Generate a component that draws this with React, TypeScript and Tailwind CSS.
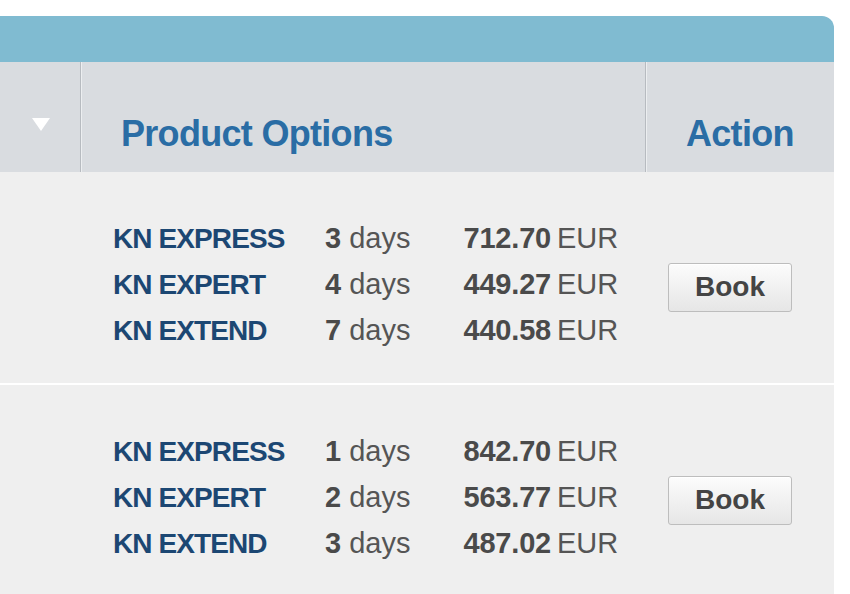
const groups = [
    [
        { name: "KN EXPRESS", days: 3, price: "712.70" },
        { name: "KN EXPERT", days: 4, price: "449.27" },
        { name: "KN EXTEND", days: 7, price: "440.58" },
    ],
    [
        { name: "KN EXPRESS", days: 1, price: "842.70" },
        { name: "KN EXPERT", days: 2, price: "563.77" },
        { name: "KN EXTEND", days: 3, price: "487.02" },
    ],
];

function OptionRow({ name, days, price }: { name: string; days: number; price: string }) {
    return (
        <div className="flex items-center h-[46px] text-[29px] leading-none">
            <span className="w-[212px] text-[28px] font-bold tracking-[-0.9px] text-[#1c4773]">{name}</span>
            <span className="w-[115px] text-[#555]">
                <b className="text-[#4a4a4a]">{days}</b> days
            </span>
            <span className="w-[111px] text-right font-bold tracking-[-0.2px] text-[#4a4a4a]">{price}</span>
            <span className="ml-[6px] text-[#555]">EUR</span>
        </div>
    );
}

export default function App() {
    return (
        <div className="w-[850px] h-[594px] bg-white overflow-hidden font-['Liberation_Sans',Arial,sans-serif] pt-4">
            <div className="w-[834px]">
                <div className="h-[46px] bg-[#80bbd1] rounded-tr-[12px]"></div>

                {/* header */}
                <div className="h-[110px] bg-[#d9dce0] flex">
                    <div className="w-[81px] flex justify-center items-center pt-[14px] pl-[2px] border-r border-[#b7bbc0]">
                        <svg width="18" height="13" viewBox="0 0 18 13">
                            <path d="M0 0 H18 L9 13 Z" fill="#fff" />
                        </svg>
                    </div>
                    <div className="flex-1 flex items-center pl-[39px] pt-[34px] border-l border-[#eceef0] border-r border-r-[#b7bbc0]">
                        <span className="text-[36px] leading-none font-bold tracking-[-0.7px] text-[#2a6da5]">Product Options</span>
                    </div>
                    <div className="w-[188px] flex items-center pl-[39px] pt-[34px] border-l border-[#eceef0]">
                        <span className="text-[36px] leading-none font-bold tracking-[-0.7px] text-[#2a6da5]">Action</span>
                    </div>
                </div>

                {/* body */}
                <div className="flex flex-col gap-[2px] bg-white">
                    {groups.map((g, i) => (
                        <div key={i} className="h-[211px] bg-[#efefef] flex items-center">
                            <div className="w-[113px]"></div>
                            <div className="w-[555px] flex flex-col pt-[14px]">
                                {g.map((o) => (
                                    <OptionRow key={o.name} {...o} />
                                ))}
                            </div>
                            <div className="flex-1 pt-[19px]">
                                <button className="w-[124px] h-[49px] rounded-[3px] border border-[#bdbdbd] bg-linear-to-b from-[#fcfcfc] to-[#e6e6e6] text-[28px] leading-none font-bold text-[#444] shadow-[inset_0_1px_0_#fff]">
                                    Book
                                </button>
                            </div>
                        </div>
                    ))}
                </div>
            </div>
        </div>
    );
}
